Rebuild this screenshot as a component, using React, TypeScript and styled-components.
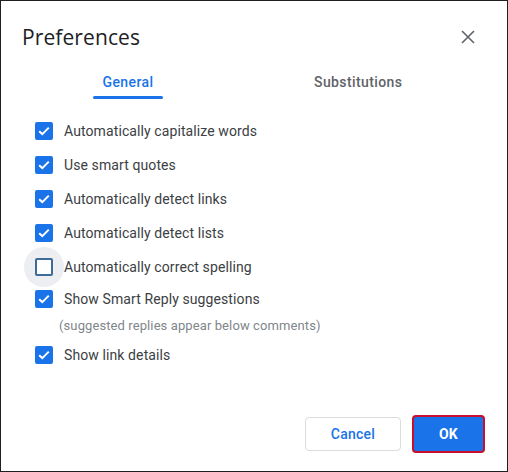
import React from "react";
import styled, { createGlobalStyle } from "styled-components";

const GlobalStyle = createGlobalStyle`
  html, body {
    margin: 0;
    padding: 0;
    background: #fff;
  }
  body {
    font-family: Roboto, "Liberation Sans", Arial, sans-serif;
  }
`;

const Dialog = styled.div`
  box-sizing: border-box;
  width: 508px;
  height: 472px;
  border: 1px solid #1f1f1f;
  background: #fff;
  display: flex;
  flex-direction: column;
  padding: 0 22px 18px 21px;
`;

const Header = styled.div`
  display: flex;
  align-items: center;
  justify-content: space-between;
  height: 72px;
`;

const Title = styled.h1`
  margin: 0;
  font-family: "Open Sans", Roboto, sans-serif;
  font-weight: 400;
  font-size: 21px;
  color: #202124;
  letter-spacing: 0.1px;
`;

const CloseButton = styled.button`
  border: none;
  background: none;
  padding: 0;
  width: 24px;
  height: 24px;
  display: flex;
  align-items: center;
  justify-content: center;
  margin-right: 5px;
  cursor: pointer;
`;

const Tabs = styled.div`
  display: flex;
  padding-left: 71px;
  height: 28px;
`;

const Tab = styled.div<{ $active?: boolean }>`
  position: relative;
  font-size: 14px;
  font-weight: 500;
  letter-spacing: 0.4px;
  color: ${(p) => (p.$active ? "#1a73e8" : "#5f6368")};
  width: ${(p) => (p.$active ? "70px" : "auto")};
  margin-right: ${(p) => (p.$active ? "151px" : "0")};
  text-align: center;
  padding-top: 1px;

  &::after {
    content: "";
    display: ${(p) => (p.$active ? "block" : "none")};
    position: absolute;
    left: 0;
    right: 0;
    bottom: 2px;
    height: 3px;
    border-radius: 3px;
    background: #1a73e8;
  }
`;

const Options = styled.div`
  display: flex;
  flex-direction: column;
  padding-top: 13px;
  padding-left: 13px;
`;

const Row = styled.label<{ $tight?: boolean }>`
  display: flex;
  align-items: center;
  gap: 11px;
  height: ${(p) => (p.$tight ? "30px" : "34px")};
  font-size: 14px;
  color: #3c4043;
  letter-spacing: 0.1px;
`;

const BoxWrap = styled.span`
  position: relative;
  z-index: 0;
  display: flex;
`;

const Box = styled.span<{ $checked: boolean; $focused?: boolean }>`
  position: relative;
  box-sizing: border-box;
  width: 18px;
  height: 18px;
  border-radius: 2px;
  flex-shrink: 0;
  display: flex;
  align-items: center;
  justify-content: center;
  background: ${(p) => (p.$checked ? "#1a73e8" : "#fff")};
  border: 2px solid ${(p) => (p.$checked ? "#1a73e8" : "#3d6c99")};

  &::before {
    content: "";
    display: ${(p) => (p.$focused ? "block" : "none")};
    position: absolute;
    left: -13px;
    top: -13px;
    width: 40px;
    height: 40px;
    border-radius: 50%;
    background: #eceef1;
    z-index: -1;
  }
`;

const Hint = styled.div`
  font-size: 13px;
  color: #80868b;
  padding-left: 24px;
  padding-top: 4px;
  height: 24px;
  box-sizing: border-box;
  line-height: 16px;
  letter-spacing: 0.1px;
`;

const Footer = styled.div`
  margin-top: auto;
  display: flex;
  justify-content: flex-end;
  gap: 11px;
`;

const Button = styled.button<{ $primary?: boolean }>`
  box-sizing: border-box;
  height: ${(p) => (p.$primary ? "38px" : "34px")};
  min-width: ${(p) => (p.$primary ? "73px" : "96px")};
  margin-top: ${(p) => (p.$primary ? "0" : "2px")};
  border-radius: 4px;
  font-family: Roboto, "Liberation Sans", sans-serif;
  font-size: 14px;
  font-weight: ${(p) => (p.$primary ? 700 : 500)};
  letter-spacing: 0.25px;
  cursor: pointer;
  color: ${(p) => (p.$primary ? "#fff" : "#1a73e8")};
  background: ${(p) => (p.$primary ? "#1a73e8" : "#fff")};
  border: ${(p) => (p.$primary ? "2px solid #c8102e" : "1px solid #dadce0")};
`;

const Check = () => (
  <svg width="12" height="10" viewBox="0 0 12 10">
    <path d="M1.2 5.2 L4.3 8.1 L10.8 1.6" fill="none" stroke="#fff" strokeWidth="2" />
  </svg>
);

const options = [
  { label: "Automatically capitalize words", checked: true },
  { label: "Use smart quotes", checked: true },
  { label: "Automatically detect links", checked: true },
  { label: "Automatically detect lists", checked: true },
  { label: "Automatically correct spelling", checked: false, focused: true },
  {
    label: "Show Smart Reply suggestions",
    checked: true,
    hint: "(suggested replies appear below comments)",
  },
  { label: "Show link details", checked: true },
];

export default function App() {
  return (
    <>
      <GlobalStyle />
      <Dialog>
        <Header>
          <Title>Preferences</Title>
          <CloseButton aria-label="Close">
            <svg width="14" height="14" viewBox="0 0 14 14">
              <path d="M1 1 L13 13 M13 1 L1 13" stroke="#5f6368" strokeWidth="1.6" />
            </svg>
          </CloseButton>
        </Header>
        <Tabs>
          <Tab $active>General</Tab>
          <Tab>Substitutions</Tab>
        </Tabs>
        <Options>
          {options.map((o) => (
            <React.Fragment key={o.label}>
              <Row $tight={!!o.hint}>
                <BoxWrap>
                  <Box $checked={o.checked} $focused={o.focused}>
                    {o.checked && <Check />}
                  </Box>
                </BoxWrap>
                {o.label}
              </Row>
              {o.hint && <Hint>{o.hint}</Hint>}
            </React.Fragment>
          ))}
        </Options>
        <Footer>
          <Button>Cancel</Button>
          <Button $primary>OK</Button>
        </Footer>
      </Dialog>
    </>
  );
}
